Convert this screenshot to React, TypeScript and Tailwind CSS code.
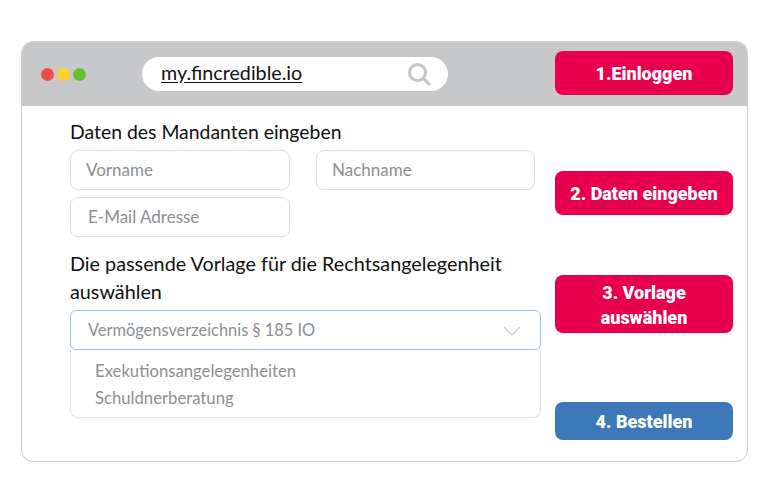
import React from 'react';

function Field({ label, className }: { label: string; className: string }) {
  return (
    <div className={`h-10 rounded-lg border border-[#dcdfe2] flex items-center text-[17px] text-[#8c8f92] ${className}`}>
      {label}
    </div>
  );
}

function StepButton({ children, className }: { children: React.ReactNode; className: string }) {
  return (
    <div className={`w-[178px] rounded-lg flex items-center justify-center text-center text-white leading-[25px] font-['Roboto',sans-serif] font-black ${className}`}>
      {children}
    </div>
  );
}

export default function App() {
  return (
    <div className="w-[768px] h-[497px] bg-white pt-[41px] pl-[21px] font-['Lato',sans-serif]">
      <div className="w-[727px] h-[421px] rounded-xl border border-[#c9cbcd] overflow-hidden">
        <div className="h-[64px] bg-[#c6c8ca] flex items-start">
          <div className="flex gap-[3px] ml-[19px] mt-[26px] w-[101px]">
            <span className="w-[13px] h-[13px] rounded-full bg-[#f44b4b]" />
            <span className="w-[13px] h-[13px] rounded-full bg-[#fdd22c]" />
            <span className="w-[13px] h-[13px] rounded-full bg-[#63c22f]" />
          </div>
          <div className="w-[306px] h-[34px] mt-[15px] rounded-full bg-white flex items-center justify-between pl-[19px] pr-[17px]">
            <span className="text-[19.7px] leading-[30px] mb-[3px] text-[#111] underline underline-offset-2">my.fincredible.io</span>
            <svg width="24" height="24" viewBox="0 0 24 24" fill="none" stroke="#c3c5c7" strokeWidth="3" strokeLinecap="round">
              <circle cx="10.5" cy="10.5" r="8" />
              <path d="M17 17l5 5" />
            </svg>
          </div>
          <StepButton className="h-[44px] mt-[9px] ml-[107px] bg-[#e8004f] text-[18px]">1.Einloggen</StepButton>
        </div>

        <div className="flex">
          <div className="w-[533px] pl-[48px]">
            <h2 className="mt-[12px] h-[27px] text-[19.4px] leading-[27px] text-[#111]">Daten des Mandanten eingeben</h2>
            <div className="mt-[5px] flex gap-[26px]">
              <Field label="Vorname" className="w-[220px] pl-[15px]" />
              <Field label="Nachname" className="w-[219px] pl-[15px]" />
            </div>
            <Field label="E-Mail Adresse" className="w-[220px] mt-[7px] pl-[17px]" />
            <h2 className="mt-[12px] w-[471px] text-[19.8px] leading-[28px] text-[#111]">
              Die passende Vorlage für die Rechtsangelegenheit auswählen
            </h2>
            <div className="mt-[5px] w-[471px]">
              <div className="h-10 rounded-md border border-[#a3bedd] flex items-center justify-between pl-[17px] pr-[19px] pt-[1px] text-[16.4px] text-[#8c8f92]">
                <span>Vermögensverzeichnis § 185 IO</span>
                <svg width="18" height="10" viewBox="0 0 18 10" fill="none" stroke="#c9cbcd" strokeWidth="1.2">
                  <path d="M1 1l8 8 8-8" />
                </svg>
              </div>
              <div className="h-[68px] rounded-b-lg border border-t-0 border-[#dfe2e5] pl-[24px] pt-[8px] text-[16.7px] leading-[27px] text-[#8c8f92]">
                <div>Exekutionsangelegenheiten</div>
                <div>Schuldnerberatung</div>
              </div>
            </div>
          </div>

          <div className="flex flex-col">
            <StepButton className="h-[44px] mt-[65px] bg-[#e8004f] text-[18px]">2. Daten eingeben</StepButton>
            <StepButton className="h-[58px] mt-[60px] bg-[#e8004f] text-[18px] pt-[1px]">
              <span>3. Vorlage<br />auswählen</span>
            </StepButton>
            <StepButton className="h-[38px] mt-[69px] bg-[#3d78b8] text-[18px]">4. Bestellen</StepButton>
          </div>
        </div>
      </div>
    </div>
  );
}
